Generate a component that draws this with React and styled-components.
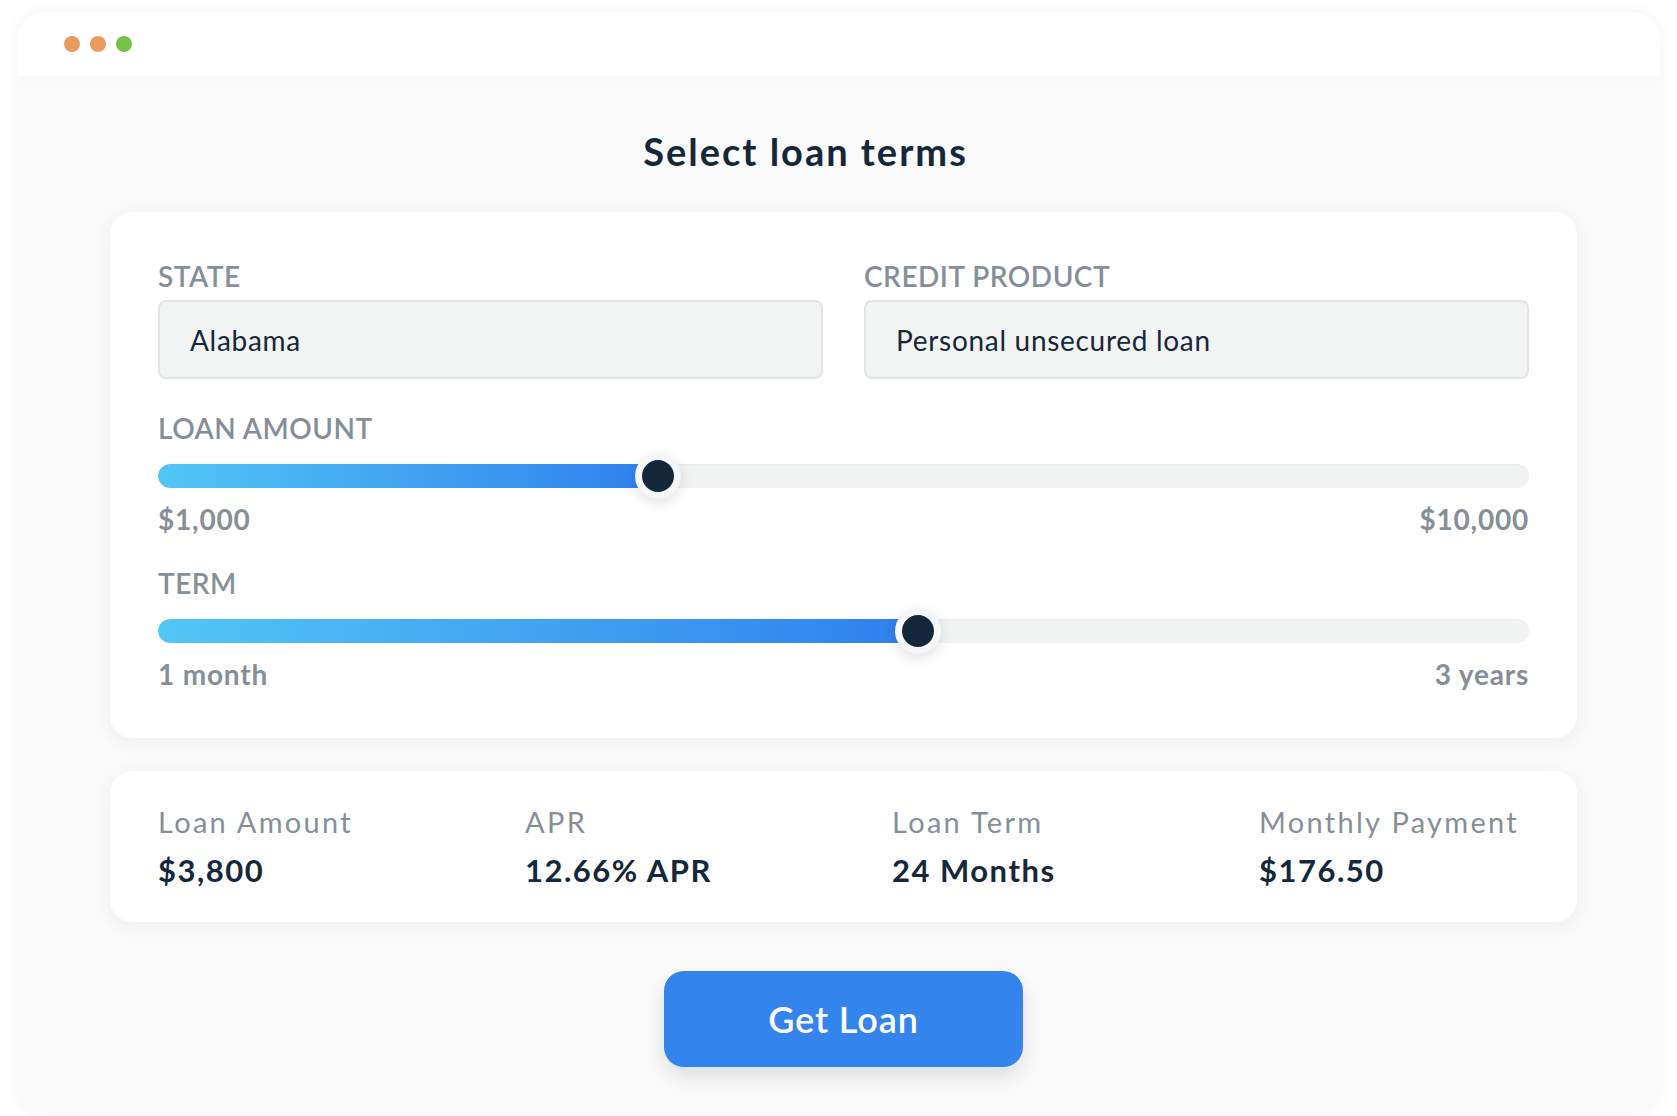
import React from "react";
import styled, { createGlobalStyle } from "styled-components";

const GlobalStyle = createGlobalStyle`
  html, body {
    margin: 0;
    padding: 0;
    background: #ffffff;
  }
  body {
    font-family: "Lato", "Open Sans", sans-serif;
    color: #15273a;
  }
`;

const Page = styled.div`
  width: 1677px;
  height: 1116px;
  padding: 12px 17px 0 17px;
  box-sizing: border-box;
  overflow: hidden;
`;

const Window = styled.div`
  height: 1103px;
  border-radius: 28px;
  background: #fafafa;
  box-shadow: 0 0 18px rgba(0, 0, 0, 0.05);
  overflow: hidden;
  display: flex;
  flex-direction: column;
`;

const TitleBar = styled.div`
  height: 64px;
  background: #ffffff;
  display: flex;
  align-items: center;
  gap: 10px;
  padding-left: 47px;
  box-shadow: 0 2px 8px rgba(0, 0, 0, 0.025);
  position: relative;
  z-index: 1;
`;

const Dot = styled.span`
  width: 16px;
  height: 16px;
  border-radius: 50%;
  background: ${(p) => p.color};
`;

const Content = styled.div`
  display: flex;
  flex-direction: column;
  align-items: stretch;
  padding: 52px 83px 0 93px;
`;

const Heading = styled.h1`
  margin: 0 76px 38px 0;
  font-size: 38px;
  line-height: 46px;
  font-weight: 700;
  letter-spacing: 2px;
  text-align: center;
  color: #15273a;
`;

const Card = styled.section`
  background: #ffffff;
  border-radius: 22px;
  box-shadow: 0 4px 18px rgba(20, 30, 40, 0.06);
`;

const TermsCard = styled(Card)`
  padding: 47px 48px 47px 48px;
  display: flex;
  flex-direction: column;
`;

const FieldRow = styled.div`
  display: grid;
  grid-template-columns: 1fr 1fr;
  gap: 41px;
`;

const Field = styled.div`
  display: flex;
  flex-direction: column;
`;

const Label = styled.div`
  font-size: 28px;
  line-height: 34px;
  font-weight: 600;
  letter-spacing: 0.5px;
  color: #858f99;
  text-transform: uppercase;
  margin-top: ${(p) => p.$top || 0}px;
`;

const Select = styled.div`
  margin-top: 7px;
  height: 79px;
  box-sizing: border-box;
  border: 2px solid #e1e4e6;
  border-radius: 8px;
  background: #f2f4f4;
  display: flex;
  align-items: center;
  padding-left: 30px;
  font-size: 28px;
  line-height: 34px;
  letter-spacing: 0.7px;
  color: #15273a;
`;

const SliderWrap = styled.div`
  margin-top: 8px;
  height: 46px;
  position: relative;
  display: flex;
  align-items: center;
`;

const Track = styled.div`
  width: 100%;
  height: 24px;
  border-radius: 12px;
  background: #f1f3f3;
  box-shadow: inset 0 1px 2px rgba(0, 0, 0, 0.04);
  overflow: hidden;
`;

const Fill = styled.div`
  height: 100%;
  border-radius: 12px;
  background: linear-gradient(90deg, #52c6f5 0%, #2f80ed 100%);
`;

const Thumb = styled.div`
  position: absolute;
  top: 0;
  width: 32px;
  height: 32px;
  margin-left: -23px;
  border: 7px solid #f5f6f7;
  border-radius: 50%;
  background: #15273a;
  box-shadow: 0 4px 14px rgba(0, 0, 0, 0.12);
`;

const Range = styled.div`
  margin-top: 3px;
  display: flex;
  justify-content: space-between;
  font-size: 28px;
  line-height: 34px;
  font-weight: 700;
  letter-spacing: 0.8px;
  color: #858f99;
`;

const SummaryCard = styled(Card)`
  margin-top: 33px;
  padding: 33px 0 34px 48px;
  display: grid;
  grid-template-columns: repeat(4, 343px);
  column-gap: 24px;
`;

const Stat = styled.div`
  display: flex;
  flex-direction: column;
  gap: 12px;
  white-space: nowrap;
`;

const StatLabel = styled.div`
  font-size: 29px;
  line-height: 36px;
  font-weight: 400;
  letter-spacing: 2.3px;
  color: #858f99;
`;

const StatValue = styled.div`
  font-size: 31px;
  line-height: 36px;
  font-weight: 700;
  letter-spacing: 1.5px;
  color: #15273a;
`;

const ButtonRow = styled.div`
  display: flex;
  justify-content: center;
  margin-top: 49px;
`;

const GetLoanButton = styled.button`
  width: 359px;
  height: 96px;
  border: none;
  border-radius: 20px;
  background: #3384ec;
  color: #ffffff;
  font-family: "Lato", "Open Sans", sans-serif;
  font-size: 36px;
  font-weight: 600;
  letter-spacing: 0.9px;
  box-shadow: 0 10px 18px rgba(20, 30, 40, 0.12);
  cursor: pointer;
`;

const Slider = ({ value }) => (
  <SliderWrap>
    <Track>
      <Fill style={{ width: `${value}%` }} />
    </Track>
    <Thumb style={{ left: `${value}%` }} />
  </SliderWrap>
);

const stats = [
  { label: "Loan Amount", value: "$3,800" },
  { label: "APR", value: "12.66% APR" },
  { label: "Loan Term", value: "24 Months" },
  { label: "Monthly Payment", value: "$176.50" },
];

export default function App() {
  return (
    <Page>
      <GlobalStyle />
      <Window>
        <TitleBar>
          <Dot color="#e99b5e" />
          <Dot color="#e99b5e" />
          <Dot color="#76c24a" />
        </TitleBar>
        <Content>
          <Heading>Select loan terms</Heading>
          <TermsCard>
            <FieldRow>
              <Field>
                <Label>State</Label>
                <Select>Alabama</Select>
              </Field>
              <Field>
                <Label>Credit Product</Label>
                <Select>Personal unsecured loan</Select>
              </Field>
            </FieldRow>
            <Label $top={32}>Loan Amount</Label>
            <Slider value={36.47} />
            <Range>
              <span>$1,000</span>
              <span>$10,000</span>
            </Range>
            <Label $top={30}>Term</Label>
            <Slider value={55.4} />
            <Range>
              <span>1 month</span>
              <span>3 years</span>
            </Range>
          </TermsCard>
          <SummaryCard>
            {stats.map((s) => (
              <Stat key={s.label}>
                <StatLabel>{s.label}</StatLabel>
                <StatValue>{s.value}</StatValue>
              </Stat>
            ))}
          </SummaryCard>
          <ButtonRow>
            <GetLoanButton>Get Loan</GetLoanButton>
          </ButtonRow>
        </Content>
      </Window>
    </Page>
  );
}
